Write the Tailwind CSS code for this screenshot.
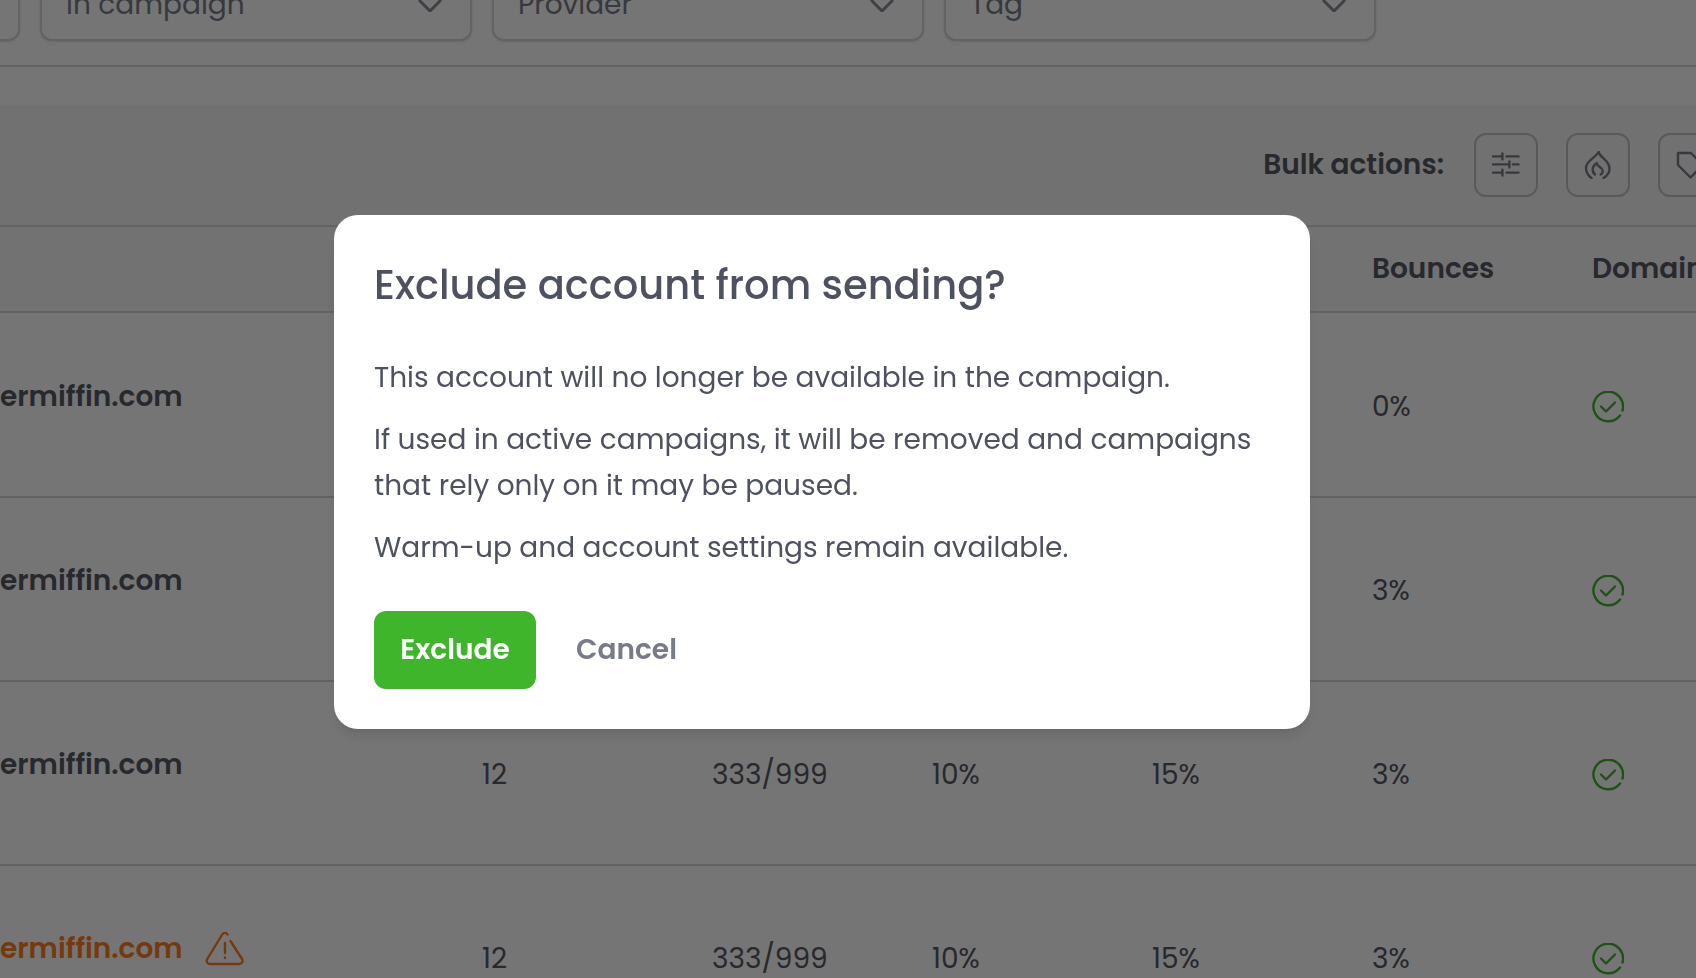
<!DOCTYPE html>
<html lang="en">
<head>
    <meta charset="UTF-8">
    <meta name="viewport" content="width=device-width, initial-scale=1.0">
    <title>Email accounts</title>
    <script src="https://cdn.jsdelivr.net/npm/@tailwindcss/browser@4"></script>
</head>
<body class="bg-white font-['Poppins','Inter',sans-serif] text-[28px] leading-[46px] text-[#4e5160]">

    <div class="h-screen overflow-hidden text-[#575965]">

        <!-- Filters -->
        <div class="-mt-9 -ml-[412px] flex gap-5 border-b-2 border-[#d8d8d8] pb-6">
            <div class="relative w-[432px] shrink-0">
                <select aria-label="Status" class="h-[77px] w-full appearance-none rounded-xl border-2 border-[#d8d8d8] bg-white px-6 pt-1 text-[#7a7d8a] shadow-sm">
                    <option></option>
                </select>
            </div>
            <div class="relative w-[432px] shrink-0">
                <select aria-label="In campaign" class="h-[77px] w-full appearance-none rounded-xl border-2 border-[#d8d8d8] bg-white px-6 pt-1 text-[#7a7d8a] shadow-sm">
                    <option>In campaign</option>
                </select>
                <svg class="pointer-events-none absolute top-8 right-[30px] h-4 w-6" viewBox="0 0 24 16" fill="none" stroke="#8a8c96" stroke-width="3"><path d="M1 4l11 11L23 4"/></svg>
            </div>
            <div class="relative w-[432px] shrink-0">
                <select aria-label="Provider" class="h-[77px] w-full appearance-none rounded-xl border-2 border-[#d8d8d8] bg-white px-6 pt-1 text-[#7a7d8a] shadow-sm">
                    <option>Provider</option>
                </select>
                <svg class="pointer-events-none absolute top-8 right-[30px] h-4 w-6" viewBox="0 0 24 16" fill="none" stroke="#8a8c96" stroke-width="3"><path d="M1 4l11 11L23 4"/></svg>
            </div>
            <div class="relative w-[432px] shrink-0">
                <select aria-label="Tag" class="h-[77px] w-full appearance-none rounded-xl border-2 border-[#d8d8d8] bg-white px-6 pt-1 text-[#7a7d8a] shadow-sm">
                    <option>Tag</option>
                </select>
                <svg class="pointer-events-none absolute top-8 right-[30px] h-4 w-6" viewBox="0 0 24 16" fill="none" stroke="#8a8c96" stroke-width="3"><path d="M1 4l11 11L23 4"/></svg>
            </div>
        </div>

        <!-- Bulk actions -->
        <div class="mt-[38px] -mr-[26px] flex items-center justify-end gap-7 border-b-2 border-[#d8d8d8] bg-[#f6f6f6] py-7">
            <span class="pr-0.5 font-semibold">Bulk actions:</span>
            <button type="button" aria-label="Edit settings" class="flex size-16 items-center justify-center rounded-xl border-2 border-[#c4c4c4]">
                <svg class="size-7" viewBox="0 0 28 28" fill="none" stroke="#7a7d8a" stroke-width="2.4" stroke-linecap="round">
                    <path d="M1 5.4h8M14.5 5.4h12M1 13.4h14.5M21 13.4h5.5M1 21.6h8M14.5 21.6h12M10.4 2.4v6M17.4 10.4v6M10.4 18.6v6"/>
                </svg>
            </button>
            <button type="button" aria-label="Warm-up" class="flex size-16 items-center justify-center rounded-xl border-2 border-[#c4c4c4]">
                <svg class="size-7" viewBox="0 0 28 28" fill="none" stroke="#7a7d8a" stroke-width="2.4" stroke-linecap="round" stroke-linejoin="round">
                    <path d="M7.5 27C4 24.5 2 21 2 17C2 9.5 11 7.5 14.7 1C15.500 6.500 25.500 9 25.500 17.500C25.500 21.500 23 25 19.500 27"/>
                    <path d="M11 23.500C7 20 8.500 14.500 12.800 12C12.800 16 18.800 16 18.800 20C18.800 21.500 18 22.800 16.600 23.500"/>
                </svg>
            </button>
            <button type="button" aria-label="Tags" class="flex size-16 items-center justify-center rounded-xl border-2 border-[#c4c4c4]">
                <svg class="size-7" viewBox="0 0 28 28" fill="none" stroke="#7a7d8a" stroke-width="2.4" stroke-linejoin="round">
                    <path d="M2 2h13l12 12-12.500 12.500L2 14z"/>
                </svg>
            </button>
        </div>

        <!-- Accounts -->
        <table class="w-full table-fixed text-left">
            <colgroup>
                <col class="w-[482px]">
                <col class="w-[230px]">
                <col class="w-[220px]">
                <col class="w-[220px]">
                <col class="w-[220px]">
                <col class="w-[220px]">
                <col>
            </colgroup>
            <thead>
                <tr class="h-[85px] border-b-2 border-[#d8d8d8] bg-[#f9f9f9]">
                    <th></th>
                    <th></th>
                    <th></th>
                    <th></th>
                    <th></th>
                    <th class="font-semibold">Bounces</th>
                    <th class="font-semibold whitespace-nowrap">Domain</th>
                </tr>
            </thead>
            <tbody id="accounts"></tbody>
        </table>
    </div>

    <!-- Dialog -->
    <div class="fixed inset-0 flex items-center justify-center bg-black/54 pr-[52px] pb-[34px]">
        <div role="dialog" aria-modal="true" aria-labelledby="dialogTitle" class="flex w-full max-w-[976px] flex-col gap-10 rounded-3xl bg-white p-10 shadow-lg">
            <h1 id="dialogTitle" class="text-[40px] leading-[60px] font-medium">Exclude account from sending?</h1>
            <div class="space-y-4">
                <p>This account will no longer be available in the campaign.</p>
                <p>If used in active campaigns, it will be removed and campaigns that rely only on it may be paused.</p>
                <p>Warm-up and account settings remain available.</p>
            </div>
            <div class="flex items-center gap-10">
                <button type="button" class="min-w-[162px] rounded-xl bg-[#3fb52c] px-6 py-4 font-semibold text-white">Exclude</button>
                <button type="button" class="font-semibold text-[#777a87]">Cancel</button>
            </div>
        </div>
    </div>

    <script>
        const accounts = [
            { bounces: '0%' },
            { bounces: '3%' },
            { bounces: '3%' },
            { bounces: '3%', warning: true },
        ];

        const warningIcon = `
            <svg class="h-9 w-10" viewBox="0 0 40 36" fill="none" stroke="#ff7e18" stroke-width="2.4" stroke-linecap="round">
                <path d="M22.500 3.500C21.300 1.400 18.500 1.300 17.200 3.500L2.300 28C.8 30.600 2.300 33 5 33H34C37 33 38.500 30.500 37 28L25.500 10M20 12v10M20 26.500v.5"/>
            </svg>`;

        const checkIcon = `
            <svg class="size-8" viewBox="0 0 32 32" fill="none" stroke="#3fb52c" stroke-width="2.4" stroke-linecap="round" stroke-linejoin="round">
                <path d="M28 24.500A14.800 14.800 0 1 1 30.500 19.500M9 15.500l5 5 9-9"/>
            </svg>`;

        document.getElementById('accounts').innerHTML = accounts.map((account) => `
            <tr class="h-[184px] border-b-2 border-[#d8d8d8] first:h-[185px]">
                <td class="pb-4 font-semibold ${account.warning ? 'text-[#ff7e18]' : ''}">
                    <div class="flex items-center gap-[22px]">ermiffin.com ${account.warning ? warningIcon : ''}</div>
                </td>
                <td class="pt-1">12</td>
                <td class="pt-1">333/999</td>
                <td class="pt-1">10%</td>
                <td class="pt-1">15%</td>
                <td class="pt-1">${account.bounces}</td>
                <td class="pt-1">${checkIcon}</td>
            </tr>`).join('');
    </script>
</body>
</html>
